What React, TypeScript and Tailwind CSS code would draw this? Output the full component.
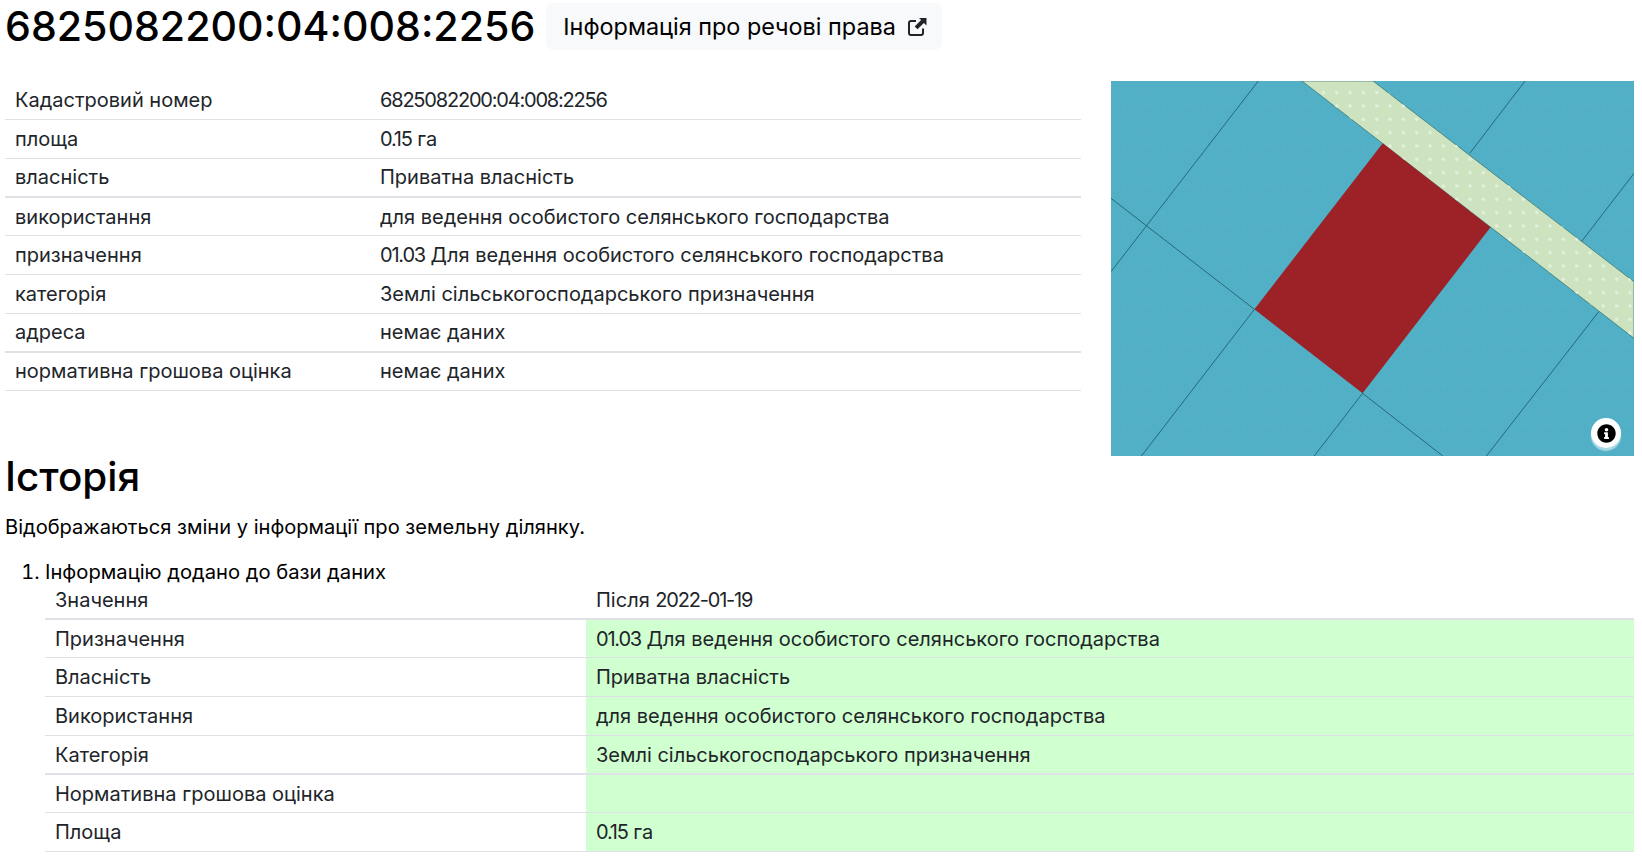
const parcelRows = [
  ['Кадастровий номер', '6825082200:04:008:2256'],
  ['площа', '0.15 га'],
  ['власність', 'Приватна власність'],
  ['використання', 'для ведення особистого селянського господарства'],
  ['призначення', '01.03 Для ведення особистого селянського господарства'],
  ['категорія', 'Землі сільськогосподарського призначення'],
  ['адреса', 'немає даних'],
  ['нормативна грошова оцінка', 'немає даних'],
];

const historyRows = [
  ['Призначення', '01.03 Для ведення особистого селянського господарства'],
  ['Власність', 'Приватна власність'],
  ['Використання', 'для ведення особистого селянського господарства'],
  ['Категорія', 'Землі сільськогосподарського призначення'],
  ['Нормативна грошова оцінка', ''],
  ['Площа', '0.15 га'],
];

const boundaries = [
  '147.3,0 0,190.7',
  '0,117.3 143.4,228.3',
  '143.4,228.3 30.4,375',
  '251.6,312.3 203.2,375',
  '251.6,312.3 331.8,375',
  '414,0 358.8,72.3',
  '523,92.3 470.4,160.7',
  '487.7,230.7 375.4,375',
];

// digits in the reference are much narrower than Inter's, so tighten just those runs
function Tight({ text }: { text: string }) {
  return (
    <>
      {text.split(/([\d.:-]+)/).map((part, i) =>
        i % 2 === 1 ? (
          <span key={i} className="tracking-[-1.2px]">
            {part}
          </span>
        ) : (
          part
        )
      )}
    </>
  );
}

function ParcelMap() {
  return (
    <div className="relative h-[375px] w-[523px] shrink-0">
      <svg viewBox="0 0 523 375" className="block h-full w-full">
        <defs>
          <pattern id="dots" x="5.7" y="5" width="13.33" height="13.33" patternUnits="userSpaceOnUse">
            <circle cx="6.67" cy="6.67" r="1.7" fill="#e6f2e0" />
          </pattern>
          <pattern id="faint" x="5.7" y="5" width="13.33" height="13.33" patternUnits="userSpaceOnUse">
            <circle cx="6.67" cy="6.67" r="1.4" fill="#55b2c8" />
          </pattern>
        </defs>
        <rect width="523" height="375" fill="#52b0c6" />
        <rect width="523" height="375" fill="url(#faint)" />
        {boundaries.map(points => (
          <polyline key={points} points={points} fill="none" stroke="#1c5566" strokeWidth="0.8" />
        ))}
        <polygon points="191,0 262,0 523,200.7 523,257.3" fill="#cde3c0" stroke="#2f6f6a" strokeWidth="0.7" />
        <polygon points="191,0 262,0 523,200.7 523,257.3" fill="url(#dots)" />
        <polygon points="271.7,62.3 379.5,146.3 251.6,312.3 143.4,228.3" fill="#9c2228" />
      </svg>
      <button className="absolute left-[480px] top-[337px] flex h-[30px] w-[30px] items-center justify-center rounded-full bg-white shadow-[0_3px_1px_#a9d9e6]">
        <svg viewBox="0 0 512 512" className="h-[19px] w-[19px]">
          <path d="M256 8C119 8 8 119 8 256s111 248 248 248 248-111 248-248S393 8 256 8zm0 100c26 0 47 21 47 47s-21 47-47 47-47-21-47-47 21-47 47-47zm66 284c0 8-6 14-14 14h-104c-8 0-14-6-14-14v-28c0-8 6-14 14-14h14v-72h-14c-8 0-14-6-14-14v-28c0-8 6-14 14-14h76c8 0 14 6 14 14v114h14c8 0 14 6 14 14v28z" fill="#000" />
        </svg>
      </button>
    </div>
  );
}

export default function App() {
  return (
    <div className="bg-white px-[5px] font-['Inter',sans-serif] text-[20px] text-[#212529]">
      {/* Title */}
      <div className="flex h-[81px] items-start gap-[11px] pt-[3px]">
        <h1 className="text-[41.1px] font-medium leading-[47px] text-black">6825082200:04:008:2256</h1>
        <a className="flex h-[47px] items-center gap-[11px] rounded-lg bg-[#f8f9fa] pl-[17px] pr-[15px] text-[23.4px] text-black">
          Інформація про речові права
          <svg viewBox="0 0 20 20" className="h-[20px] w-[20px]">
            <path d="M9 4H4a2 2 0 0 0-2 2v10a2 2 0 0 0 2 2h10a2 2 0 0 0 2-2v-4.500" fill="none" stroke="#212529" strokeWidth="2" />
            <path d="M12 1h7.500v7.500l-2.600-2.600-6.400 6.400-2.800-2.800 6.400-6.400z" fill="#212529" />
          </svg>
        </a>
      </div>

      {/* Parcel info + map */}
      <div className="flex justify-between pr-[3px]">
        <table className="h-fit w-[1076px] border-collapse">
          <tbody>
            {parcelRows.map(([label, value]) => (
              <tr key={label} className="h-[38.7px] border-b border-[#dee2e6] [&:nth-child(3)]:border-b-2 [&:nth-child(7)]:border-b-2">
                <td className="w-[365px] px-[10px]">{label}</td>
                <td className="px-[10px]">
                  <Tight text={value} />
                </td>
              </tr>
            ))}
          </tbody>
        </table>
        <ParcelMap />
      </div>

      {/* History */}
      <h2 className="-mt-[2px] text-[40.4px] font-medium leading-[46px] text-black">Історія</h2>
      <p className="mt-[14px] text-[20.1px] leading-[27px] text-black">Відображаються зміни у інформації про земельну ділянку.</p>
      <ol className="mt-[16px] list-decimal pl-[40px] pr-[3px] text-black">
        <li>
          <span className="text-[20.2px] leading-[27px]">Інформацію додано до бази даних</span>
          <table className="w-full border-collapse text-[#212529]">
            <thead>
              <tr className="h-[32px] border-b-2 border-[#dee2e6]">
                <td className="w-[541px] px-[10px] align-top leading-[27px]">Значення</td>
                <td className="px-[10px] align-top leading-[27px]">
                  <Tight text="Після 2022-01-19" />
                </td>
              </tr>
            </thead>
            <tbody>
              {historyRows.map(([label, value]) => (
                <tr key={label} className="h-[38.8px] border-b border-[#dee2e6] [&:nth-child(4)]:border-b-2">
                  <td className="px-[10px]">{label}</td>
                  <td className="bg-[#d0ffd0] px-[10px]">
                    <Tight text={value} />
                  </td>
                </tr>
              ))}
            </tbody>
          </table>
        </li>
      </ol>
    </div>
  );
}
